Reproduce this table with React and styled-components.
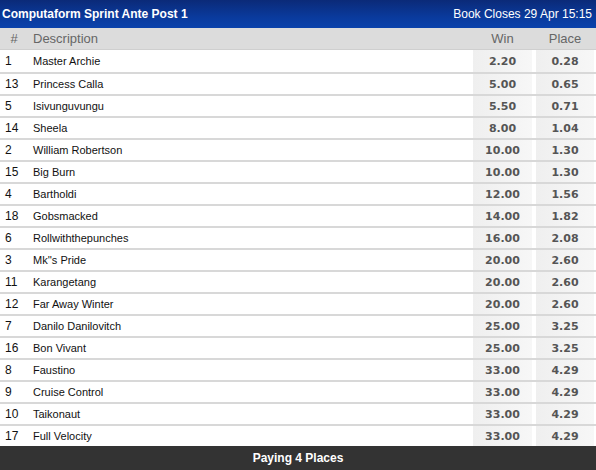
import React from "react";
import styled, { createGlobalStyle } from "styled-components";

const Global = createGlobalStyle`
  html, body { margin: 0; padding: 0; background: #fff; }
  body { font-family: "Liberation Sans", Arial, sans-serif; }
`;

const Wrap = styled.div`
  width: 596px;
  display: flex;
  flex-direction: column;
`;

const TitleBar = styled.div`
  height: 28px;
  display: flex;
  align-items: center;
  justify-content: space-between;
  padding: 0 4px 0 2px;
  background: linear-gradient(to bottom, #0b2a78 0%, #0a3a9c 60%, #0a42ac 100%);
  color: #fff;
  font-size: 12px;
`;

const Title = styled.span`
  font-weight: bold;
`;

const Grid = styled.div`
  display: grid;
  grid-template-columns: 28px 1fr 59px 4px 58px 2px;
  align-items: stretch;
`;

const HeadRow = styled(Grid)`
  height: 21px;
  background: #dcdcdc;
  border-bottom: 1px solid #cfcfcf;
  color: #666;
  font-size: 13px;
`;

const HeadCell = styled.div`
  display: flex;
  align-items: center;
  justify-content: ${(p) => p.$align || "flex-start"};
  padding-left: ${(p) => p.$pl || 0}px;
`;

const Row = styled(Grid)`
  height: 20px;
  border-top: 2px solid #d8d8d8;
  &:first-of-type { height: 22px; border-top: none; }
`;

const Rows = styled.div`
  display: flex;
  flex-direction: column;
`;

const NumCell = styled.div`
  display: flex;
  align-items: center;
  padding-left: 5px;
  font-size: 12px;
  color: #111;
`;

const NameCell = styled.div`
  display: flex;
  align-items: center;
  padding-left: 5px;
  font-size: 11px;
  color: #111;
`;

const Odds = styled.div`
  display: flex;
  align-items: center;
  justify-content: center;
  background: linear-gradient(to right, #efefef, #f7f7f7);
  font-family: "DejaVu Sans", Verdana, sans-serif;
  font-weight: bold;
  font-size: 11px;
  color: #555;
`;

const Footer = styled.div`
  height: 24px;
  display: flex;
  align-items: center;
  justify-content: center;
  background: #333;
  color: #fff;
  font-weight: bold;
  font-size: 12px;
`;

const runners = [
  ["1", "Master Archie", "2.20", "0.28"],
  ["13", "Princess Calla", "5.00", "0.65"],
  ["5", "Isivunguvungu", "5.50", "0.71"],
  ["14", "Sheela", "8.00", "1.04"],
  ["2", "William Robertson", "10.00", "1.30"],
  ["15", "Big Burn", "10.00", "1.30"],
  ["4", "Bartholdi", "12.00", "1.56"],
  ["18", "Gobsmacked", "14.00", "1.82"],
  ["6", "Rollwiththepunches", "16.00", "2.08"],
  ["3", "Mk''s Pride", "20.00", "2.60"],
  ["11", "Karangetang", "20.00", "2.60"],
  ["12", "Far Away Winter", "20.00", "2.60"],
  ["7", "Danilo Danilovitch", "25.00", "3.25"],
  ["16", "Bon Vivant", "25.00", "3.25"],
  ["8", "Faustino", "33.00", "4.29"],
  ["9", "Cruise Control", "33.00", "4.29"],
  ["10", "Taikonaut", "33.00", "4.29"],
  ["17", "Full Velocity", "33.00", "4.29"],
];

export default function App() {
  return (
    <Wrap>
      <Global />
      <TitleBar>
        <Title>Computaform Sprint Ante Post 1</Title>
        <span>Book Closes 29 Apr 15:15</span>
      </TitleBar>
      <HeadRow>
        <HeadCell $align="center">#</HeadCell>
        <HeadCell $pl={5}>Description</HeadCell>
        <HeadCell $align="center">Win</HeadCell>
        <div />
        <HeadCell $align="center">Place</HeadCell>
        <div />
      </HeadRow>
      <Rows>
        {runners.map(([n, name, w, p]) => (
          <Row key={n}>
            <NumCell>{n}</NumCell>
            <NameCell>{name}</NameCell>
            <Odds>{w}</Odds>
            <div />
            <Odds>{p}</Odds>
            <div />
          </Row>
        ))}
      </Rows>
      <Footer>Paying 4 Places</Footer>
    </Wrap>
  );
}
